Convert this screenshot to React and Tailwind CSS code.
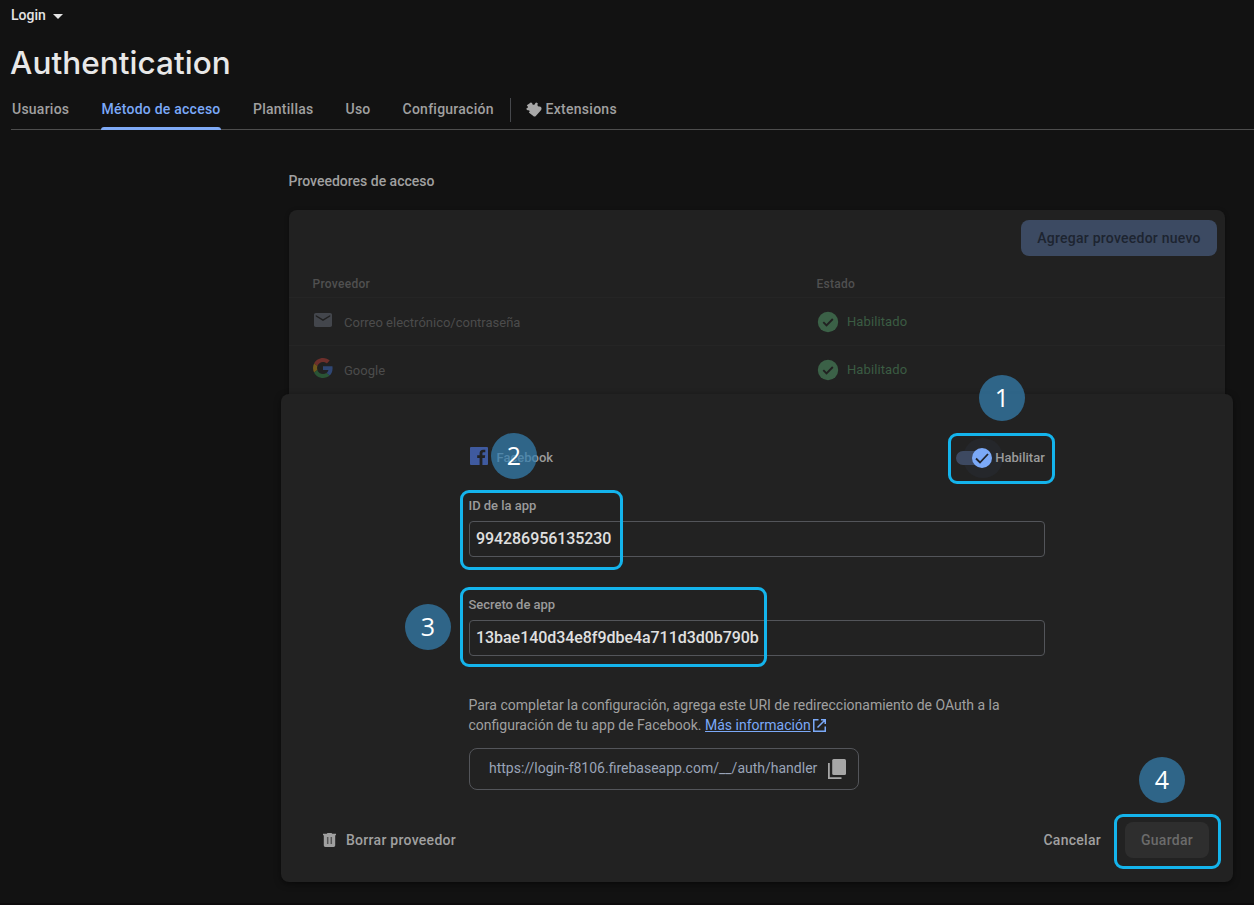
import React from "react";

const tabs = [
  { label: "Usuarios", cls: "w-[90px] pl-px tracking-[0.24px]" },
  { label: "Método de acceso", active: true, cls: "w-[151px] pl-[0.5px] tracking-[0.24px]" },
  { label: "Plantillas", cls: "w-[93px] pl-px tracking-[0.25px]" },
  { label: "Uso", cls: "w-[57px] pl-[0.5px] tracking-[0.25px]" },
  { label: "Configuración", cls: "w-[108px] pl-[0.5px] tracking-[0.25px]" },
];

function CheckCircle() {
  return (
    <svg viewBox="0 0 24 24" className="-ml-px size-[24px] fill-[#3b6147]">
      <circle cx="12" cy="12" r="10.200" />
      <path d="M7.300 12.200l3.200 3.200 6.300-6.400" fill="none" stroke="#212121" strokeWidth="1.900" />
    </svg>
  );
}

function MailIcon() {
  return (
    <svg viewBox="0 0 18 14" className="h-[14px] w-[18px] fill-[#43464c]">
      <path d="M16.200 0H1.800C.8 0 0 .8 0 1.750v10.500C0 13.200.8 14 1.800 14h14.400c1 0 1.800-.8 1.800-1.750V1.750C18 .8 17.200 0 16.200 0zm0 3.600L9 8 1.800 3.600V1.900L9 6.300l7.200-4.400z" />
    </svg>
  );
}

function GoogleIcon() {
  return (
    <svg viewBox="0 0 48 48" className="size-[20px]">
      <path fill="#6d2f2b" d="M24 9.500c3.540 0 6.710 1.220 9.210 3.600l6.850-6.850C35.900 2.380 30.470 0 24 0 14.620 0 6.510 5.380 2.560 13.220l7.980 6.190C12.430 13.720 17.740 9.500 24 9.500z" />
      <path fill="#2f4673" d="M46.980 24.550c0-1.570-.15-3.090-.38-4.550H24v9.020h12.940c-.58 2.960-2.260 5.480-4.780 7.180l7.730 6c4.510-4.180 7.090-10.360 7.090-17.650z" />
      <path fill="#70581b" d="M10.530 28.590c-.48-1.450-.76-2.990-.76-4.590s.27-3.140.76-4.590l-7.980-6.190C.92 16.460 0 20.120 0 24c0 3.880.92 7.540 2.560 10.780l7.970-6.190z" />
      <path fill="#2a5435" d="M24 48c6.480 0 11.930-2.130 15.890-5.810l-7.730-6c-2.150 1.450-4.920 2.300-8.160 2.300-6.260 0-11.570-4.220-13.470-9.910l-7.980 6.190C6.510 42.620 14.620 48 24 48z" />
    </svg>
  );
}

function Row({ icon, name }) {
  return (
    <div className="flex h-[48px] items-center border-t border-[#252525]">
      <div className="flex w-[528px] items-center pl-[23px]">
        <span className="-mt-[3px] flex w-[22px] justify-center">{icon}</span>
        <span className="ml-[10px] pt-[2px] text-[13px] text-[#4c4c4c]">{name}</span>
      </div>
      <CheckCircle />
      <span className="ml-[7px] text-[13px] tracking-[0.1px] text-[#3b5c43]">Habilitado</span>
    </div>
  );
}

function Badge({ n, pos }) {
  return (
    <div className={"absolute z-10 flex size-[46px] items-center justify-center rounded-full bg-[#347fb0]/72 font-['Open_Sans',sans-serif] text-[25px] text-white " + pos}>
      {n}
    </div>
  );
}

function Outline({ pos }) {
  return <div className={"absolute z-10 rounded-[9px] border-3 border-[#14b4ec] " + pos} />;
}

function Field({ label, value, track }) {
  return (
    <div>
      <div className="-ml-[0.5px] h-[16px] pt-px text-[13px] leading-[16px] font-medium tracking-[-0.03px] text-[#9b9b9b]">{label}</div>
      <div className="mt-[8px] flex h-[36px] items-center rounded-[4px] border border-[#53555a] pl-[6px]">
        <span className={"text-[16px] font-medium text-[#e0e0e0] " + track}>{value}</span>
      </div>
    </div>
  );
}

export default function App() {
  return (
    <div className="relative h-[905px] w-[1254px] overflow-hidden border-b-2 border-[#0d0b0c] bg-[#121212] font-['Roboto',sans-serif] text-[#a0a0a0]">
      <header className="pl-[11px]">
        <div className="flex h-[31px] items-center text-[14px] font-medium text-[#e4e4e4]">
          <span>Login</span>
          <svg viewBox="0 0 10 5" className="mt-[2px] ml-[7px] h-[5px] w-[10px] fill-[#e4e4e4]"><path d="M0 0h10L5 5z" /></svg>
        </div>
        <h1 className="-ml-px flex h-[64px] items-center font-['Inter',sans-serif] text-[31.5px] font-medium tracking-[0.05px] text-[#e8e8e8]">Authentication</h1>
        <nav className="flex h-[35px] border-b border-[#4d4d4d] text-[14px] font-medium">
          {tabs.map((t) => (
            <div key={t.label} className={"relative shrink-0 pt-[4px] " + t.cls}>
              <span className={t.active ? "text-[#7ba9f8]" : ""}>{t.label}</span>
              {t.active && <span className="absolute -bottom-px left-0 h-[3px] w-[120px] rounded-t-[3px] bg-[#7faaf6]" />}
            </div>
          ))}
          <div className="mt-[3px] h-[24px] w-px bg-[#46484c]" />
          <div className="flex h-[28px] items-center pl-[15px]">
            <svg viewBox="0 0 16 16" className="mt-[2px] size-[16px] fill-[#a8a8a8]">
              <path d="M2.700 2L4.700.6 6.200 1c-.2 1.700 1.300 2.500 2.600 1.300.2-1.100.9-1.900 1.700-1.900l1.400 1.200c-1 1.700-.2 3.300 1.500 2.900 1.500-.1 2.400 1.200 2.100 2.600-.1.800-.6 1.300-1.200 1.900l-4.500 4.900c-.8.800-1.700.8-2.500 0L2.800 10.600c1.500-.9.900-2.400-.8-2.300L.8 7.900.4 6.200c1.500-.1 2-1.100 1.100-1.900L.8 3.300z" />
            </svg>
            <span className="ml-[3.5px] tracking-[0.28px]">Extensions</span>
          </div>
        </nav>
      </header>
      <main>
        <h2 className="mt-[41px] ml-[288.5px] h-[39px] text-[14px] leading-[20px] font-medium">Proveedores de acceso</h2>
        <section className="ml-[289px] h-[184px] w-[936px] rounded-t-[8px] bg-[#212121] shadow-[0_1px_4px_rgba(0,0,0,0.4)]">
          <div className="flex h-[60px] justify-end pt-[10px] pr-[8px]">
            <button className="h-[36px] w-[196px] rounded-[8px] bg-[#3c4a62] text-[14px] font-medium tracking-[0.25px] text-[#1d2430]">Agregar proveedor nuevo</button>
          </div>
          <div className="flex h-[27px] items-center pl-[23.5px] text-[12px] font-medium tracking-[0.28px] text-[#505050]">
            <span className="w-[504px]">Proveedor</span>
            <span>Estado</span>
          </div>
          <Row icon={<MailIcon />} name="Correo electrónico/contraseña" />
          <Row icon={<GoogleIcon />} name="Google" />
        </section>
        <section className="relative ml-[281px] h-[488px] w-[952px] rounded-[8px] bg-[#222222] pt-[53px] shadow-[0_2px_6px_rgba(0,0,0,0.5)]">
          <div className="ml-[188px] w-[576px]">
            <div className="flex h-[21px] items-center text-[13px] font-medium text-[#9b9b9b]">
              <svg viewBox="0 0 18 18" className="mb-[3px] ml-px size-[18px]">
                <rect width="18" height="18" rx="1" fill="#3f5a9f" />
                <path d="M12.400 18v-7h2.400l.4-2.700h-2.800V6.600c0-.8.300-1.300 1.400-1.300h1.500V2.800c-.3 0-1.200-.1-2.200-.1-2.100 0-3.500 1.300-3.500 3.600v2H7.200V11h2.400v7z" fill="#222222" />
              </svg>
              <span className="ml-[8.5px]">Facebook</span>
              <span className="relative ml-auto flex items-center">
                <span className="absolute -left-[33px] size-[40px] rounded-full bg-[#25272b]" />
                <span className="absolute -left-[40px] h-[14px] w-[34px] rounded-full bg-[#3d4961]" />
                <svg viewBox="0 0 20 20" className="absolute -left-[24px] size-[20px]">
                  <circle cx="10" cy="10" r="10" fill="#7ba9f8" />
                  <path d="M4 10.500l4 4 8-8.500" fill="none" stroke="#20242c" strokeWidth="1.800" />
                </svg>
                <span className="relative -left-[0.25px]">Habilitar</span>
              </span>
            </div>
            <div className="mt-[29px]"><Field label="ID de la app" value="994286956135230" track="tracking-[-0.07px]" /></div>
            <div className="mt-[39px]"><Field label="Secreto de app" value="13bae140d34e8f9dbe4a711d3d0b790b" track="tracking-[-0.05px]" /></div>
            <p className="mt-[39px] -ml-[0.5px] text-[14px] leading-[20px] whitespace-nowrap">
              Para completar la configuración, agrega este URI de redireccionamiento de OAuth a la
              <br />
              configuración de tu app de Facebook.{" "}
              <a className="text-[#7ba9f8] underline">Más información</a>
              <svg viewBox="0 0 13 13" className="ml-[2.5px] inline size-[13px] align-[-2px]" fill="none" stroke="#7ba9f8" strokeWidth="1.500">
                <path d="M5.500.75H.75v11.500h11.500V7.500M8 .75h4.250V5M12 1L4.500 8.500" />
              </svg>
            </p>
            <div className="mt-[13px] flex h-[42px] w-[390px] items-center rounded-[8px] border border-[#53555a] pl-[19px]">
              <span className="-mt-[2px] text-[14px] text-[#9aa4b8]">https://login-f8106.firebaseapp.com/__/auth/handler</span>
              <svg viewBox="0 0 18 20" className="ml-[11px] h-[20px] w-[18px]">
                <rect x="4.200" y="0" width="13.800" height="16" rx="1.500" fill="#a6a6a6" />
                <path d="M.9 4v15.100H13.500" fill="none" stroke="#a6a6a6" strokeWidth="1.800" />
              </svg>
            </div>
          </div>
          <footer className="mt-[32px] flex h-[36px] items-center pr-[24px] pl-[42px] text-[14px] font-medium tracking-[0.28px]">
            <svg viewBox="0 0 13 14" className="h-[14px] w-[13px]">
              <path d="M0 .8h3.800L4.500 0h4l.7.800H13v1.500h-.8v10c0 1-.7 1.700-1.600 1.700H2.400c-1 0-1.600-.7-1.600-1.700v-10H0z" fill="#a0a0a0" />
              <path d="M4.700 4v7M8.300 4v7" stroke="#555" strokeWidth="1.500" />
            </svg>
            <span className="ml-[10px]">Borrar proveedor</span>
            <span className="ml-auto">Cancelar</span>
            <button className="ml-[24px] h-[36px] w-[84px] rounded-[8px] bg-[#2e2e2e] font-medium tracking-[0.28px] text-[#6b6b6b]">Guardar</button>
          </footer>
        </section>
      </main>
      <Outline pos="left-[948px] top-[433px] h-[51px] w-[107px]" />
      <Outline pos="left-[460px] top-[490px] h-[80px] w-[163px]" />
      <Outline pos="left-[460px] top-[587px] h-[80px] w-[307px]" />
      <Outline pos="left-[1114px] top-[814px] h-[55px] w-[107px]" />
      <Badge n="1" pos="left-[979px] top-[375px]" />
      <Badge n="2" pos="left-[491px] top-[433px]" />
      <Badge n="3" pos="left-[405px] top-[604px]" />
      <Badge n="4" pos="left-[1139px] top-[757px]" />
    </div>
  );
}
